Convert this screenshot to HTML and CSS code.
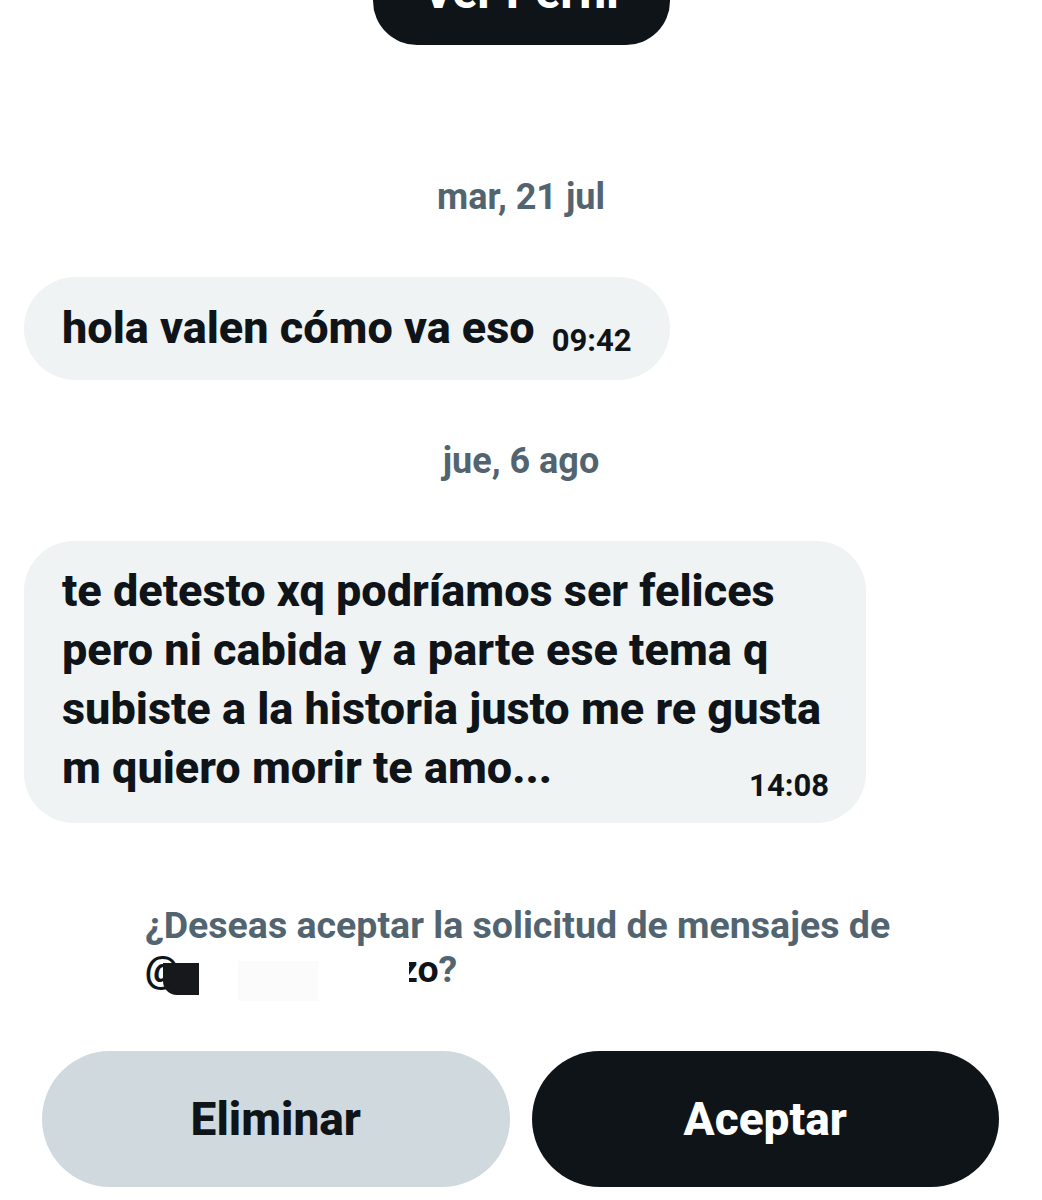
FILE: index.html
```html
<!DOCTYPE html>
<html lang="es">
  <head>
    <meta charset="UTF-8" />
    <meta name="viewport" content="width=device-width, initial-scale=1.0" />
    <title>Solicitud de mensaje</title>
    <link rel="stylesheet" href="styles.css">
  </head>
  <body>
    <main class="chat">
      <div class="profile">
        <button class="profileBtn">Ver Perfil</button>
      </div>

      <p class="day">mar, 21 jul</p>

      <div class="bubble short">
        <span class="msg">hola valen cómo va eso</span>
        <span class="time">09:42</span>
      </div>

      <p class="day second">jue, 6 ago</p>

      <div class="bubble long">
        <span class="msg">te detesto xq podríamos ser felices<br>pero ni cabida y a parte ese tema q<br>subiste a la historia justo me re gusta<br>m quiero morir te amo...</span>
        <span class="time">14:08</span>
      </div>

      <p class="question">
        ¿Deseas aceptar la solicitud de mensajes de<br>
        <span class="handle"><span class="dark">@</span><span class="gap"></span><span class="dark">zo</span>?</span>
        <span class="blackout"></span>
        <span class="whiteout"></span>
        <span class="whiteout small"></span>
      </p>

      <div class="actions">
        <button class="btn delete">Eliminar</button>
        <button class="btn accept">Aceptar</button>
      </div>
    </main>
  </body>
</html>
```

FILE: styles.css
```css
* {
  margin: 0;
  padding: 0;
  box-sizing: border-box;
}

body {
  background-color: #fff;
  color: #0f1419;
  font-family: Roboto, "Liberation Sans", sans-serif;
  font-weight: 700;
  width: 1042px;
  height: 1200px;
  overflow: hidden;
}

.chat {
  display: flex;
  flex-direction: column;
}

.profile {
  display: flex;
  justify-content: center;
}

.profileBtn {
  margin-top: -60px;
  width: 297px;
  height: 105px;
  padding-top: 30px;
  border: none;
  border-radius: 44px;
  background-color: #0f1419;
  color: #fff;
  font-family: inherit;
  font-weight: 800;
  font-size: 46px;
  line-height: 44px;
  align-self: flex-start;
  display: flex;
  justify-content: center;
  align-items: flex-start;
}

.day {
  margin-top: 133px;
  text-align: center;
  color: #536471;
  font-size: 36px;
  line-height: 38px;
}

.day.second {
  margin-top: 62px;
}

.bubble {
  align-self: flex-start;
  margin-top: 61px;
  margin-left: 24px;
  background-color: #eff3f4;
}

.msg {
  font-size: 45px;
  font-weight: 800;
  line-height: 52px;
  white-space: nowrap;
}

.time {
  font-size: 31px;
  line-height: 28px;
  white-space: nowrap;
}

.bubble.short {
  display: flex;
  align-items: flex-end;
  height: 103px;
  padding: 25px 38px 26px 38px;
  border-radius: 52px;
  gap: 17px;
}

.bubble.short .time {
  margin-bottom: -1px;
}

.bubble.long {
  display: grid;
  grid-template-areas: "body";
  width: 842px;
  height: 282px;
  padding: 20px 37px 25px 38px;
  border-radius: 50px;
}

.bubble.long .msg,
.bubble.long .time {
  grid-area: body;
}

.bubble.long .msg {
  line-height: 59px;
}

.bubble.long .time {
  justify-self: end;
  align-self: end;
  margin-bottom: -2px;
}

.question {
  position: relative;
  margin-top: 80px;
  margin-left: 145px;
  color: #536471;
  font-size: 37.5px;
  line-height: 44px;
  white-space: nowrap;
}

.handle .gap {
  display: inline-block;
  width: 220px;
}

.handle .dark {
  color: #0f1419;
}

.blackout {
  position: absolute;
  left: 18px;
  top: 60px;
  width: 36px;
  height: 32px;
  background-color: #16181b;
  border-bottom-left-radius: 14px;
}

.whiteout {
  position: absolute;
  left: 93px;
  top: 58px;
  width: 80px;
  height: 40px;
  background-color: #fbfbfb;
}

.whiteout.small {
  left: 226px;
  width: 38px;
  background-color: #fff;
}

.actions {
  display: flex;
  gap: 22px;
  margin-top: 60px;
  padding: 0 43px 0 42px;
}

.btn {
  flex: 1;
  height: 136px;
  border: none;
  border-radius: 68px;
  font-family: inherit;
  font-weight: 800;
  font-size: 46px;
}

.btn.delete {
  background-color: #cfd9de;
  color: #0f1419;
}

.btn.accept {
  background-color: #0f1419;
  color: #fff;
}
```
